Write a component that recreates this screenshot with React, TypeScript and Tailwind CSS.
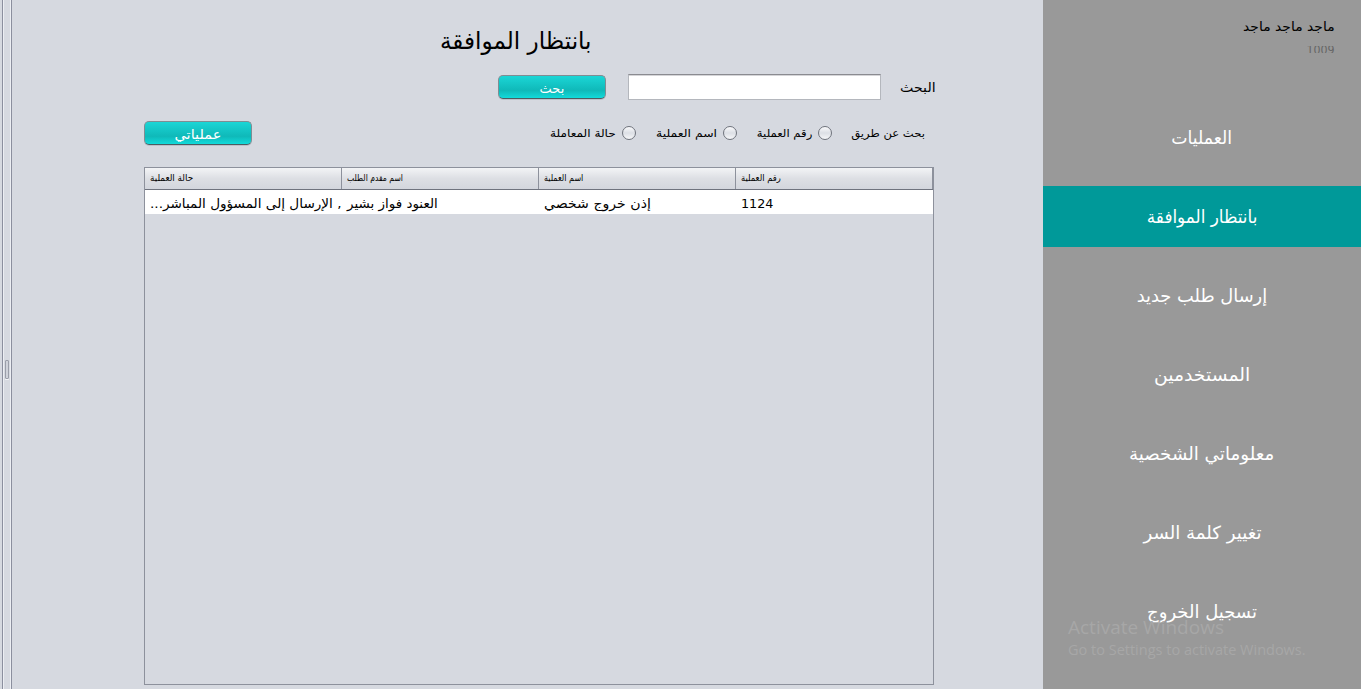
import type { ReactNode } from "react";

const navItems = [
  { label: "العمليات", fit: "scale-x-[0.96]" },
  { label: "بانتظار الموافقة", fit: "scale-x-[0.935]", active: true },
  { label: "إرسال طلب جديد", fit: "scale-x-[0.99]" },
  { label: "المستخدمين", fit: "scale-x-[1.045]" },
  { label: "معلوماتي الشخصية", fit: "scale-x-[1.014]" },
  { label: "تغيير كلمة السر", fit: "scale-x-[1.01]" },
  { label: "تسجيل الخروج", fit: "" },
];

const columns = [
  { label: "حالة العملية", fit: "scale-x-[0.98]" },
  { label: "اسم مقدم الطلب", fit: "scale-x-[0.85]" },
  { label: "اسم العملية", fit: "scale-x-[0.89]" },
  { label: "رقم العملية", fit: "scale-x-[0.93]" },
];

const row = [
  { text: ", الإرسال إلى المسؤول المباشر...", fit: "scale-x-[1.045]" },
  { text: "العنود فواز بشير", fit: "scale-x-[1.035]" },
  { text: "إذن خروج شخصي", fit: "scale-x-[1.085]" },
  { text: "1124", fit: "scale-x-[0.98]" },
];

function Splitter() {
  return (
    <div className="flex h-full w-3 shrink-0 pl-[2px]">
      <div className="w-px bg-[#8b8f9e]" />
      <div className="w-px bg-[#eceef3]" />
      <div className="flex flex-1 items-start justify-center pt-[360px]">
        <div className="h-[19px] w-1 rounded-[1px] border border-[#9a9ea9] bg-[#cfd2da] shadow-[0_1px_0_#f3f4f7]" />
      </div>
      <div className="w-px bg-[#eceef3]" />
      <div className="w-px bg-[#8b8f9e]" />
    </div>
  );
}

function TealButton({ children }: { children: ReactNode }) {
  return (
    <button className="flex h-6 w-[108px] items-center justify-center rounded-[5px] border border-[#7f8d93] border-b-[#4c5c61] bg-linear-to-b from-[#1bd6d6] via-[#0fb9b9] via-65% to-[#12dada] pt-[2px] text-[13px] leading-none text-white shadow-[0_1px_0_#bcc0c9]">
      {children}
    </button>
  );
}

function Radio({ label, width, fit }: { label: string; width: string; fit: string }) {
  return (
    <label className="flex items-center gap-[6px]">
      <span className="h-[14px] w-[14px] shrink-0 rounded-full border border-[#6f737c] bg-linear-to-b from-[#fafafc] via-[#dcdfe5] to-[#f6f7f9]" />
      <span className={`${width} whitespace-nowrap`}>
        <span className={`inline-block origin-right ${fit}`}>{label}</span>
      </span>
    </label>
  );
}

export default function App() {
  return (
    <div className="flex h-[689px] w-[1361px] overflow-hidden bg-[#d6d9e0] font-['DejaVu_Sans',sans-serif] text-black">
      <Splitter />
      <main className="flex h-full flex-1 flex-col pl-[132px]">
        <h1 className="mt-[23px] ml-[296px] flex h-9 w-[151px] items-center justify-center text-[24px] leading-none whitespace-nowrap">
          <span className="scale-x-[0.962]">بانتظار الموافقة</span>
        </h1>
        <div className="mt-[15px] flex h-[26px] items-center pl-[354px]">
          <TealButton>بحث</TealButton>
          <input className="ml-[22px] h-[26px] w-[253px] border border-[#b4b7bd] border-t-[#8a8b90] bg-white shadow-[inset_0_1px_0_#d5d5d8] outline-none" />
          <span dir="rtl" className="ml-[19px] flex w-9 items-center text-[13px] leading-none whitespace-nowrap">
            <span className="origin-right scale-x-[1.09]">البحث</span>
          </span>
        </div>
        <div className="mt-[21px] flex h-6 w-[781px] items-center justify-between">
          <TealButton>
            <span className="scale-x-[1.12]">عملياتي</span>
          </TealButton>
          <div dir="rtl" className="flex items-center text-[11px] leading-none">
            <span className="ml-5 w-[73px] whitespace-nowrap">
              <span className="inline-block origin-right scale-x-[1.055]">بحث عن طريق</span>
            </span>
            <div className="flex gap-5">
              <Radio label="رقم العملية" width="w-[55px]" fit="scale-x-[1.06]" />
              <Radio label="اسم العملية" width="w-[61px]" fit="scale-x-[1.13]" />
              <Radio label="حالة المعاملة" width="w-[66px]" fit="scale-x-[1.1]" />
            </div>
          </div>
        </div>
        <section className="mt-[22px] h-[518px] w-[790px] border border-[#8d919c]">
          <div className="flex h-[22px] border-b border-[#6f737e] bg-linear-to-b from-[#f3f4f6] via-[#dddfe4] to-[#d3d6dd]">
            {columns.map((c) => (
              <div key={c.label} className="flex w-[197px] items-center border-r border-[#8d919c] pl-[5px] text-[9px] leading-none whitespace-nowrap">
                <span className={`origin-left ${c.fit}`}>{c.label}</span>
              </div>
            ))}
          </div>
          <div className="flex h-[24px] bg-white text-[13px] leading-none">
            {row.map((c) => (
              <div key={c.text} dir="rtl" className="flex w-[197px] items-center justify-end pt-[2px] pl-[5px] whitespace-nowrap">
                <span className={`origin-left ${c.fit}`}>{c.text}</span>
              </div>
            ))}
          </div>
        </section>
      </main>
      <aside className="relative flex h-full w-[318px] shrink-0 flex-col bg-[#999999]">
        <div dir="rtl" className="flex h-[107px] flex-col items-start pt-[17px] pr-[26px]">
          <span className="flex h-[18px] origin-right scale-x-[1.07] items-center text-[13px] leading-none">ماجد ماجد ماجد</span>
          <span className="mt-[11px] flex h-[7px] origin-right scale-x-[0.92] items-center overflow-hidden text-[12px] leading-none text-[#666]">1009</span>
        </div>
        <nav className="flex flex-col gap-[18px] text-[18px] leading-none text-white">
          {navItems.map((n) => (
            <a key={n.label} className={`flex h-[61px] items-center justify-center whitespace-nowrap ${n.active ? "bg-[#009999]" : ""}`}>
              <span className={n.fit}>{n.label}</span>
            </a>
          ))}
        </nav>
        <div className="absolute top-[615px] left-[25px] font-['Open_Sans',sans-serif] text-[#a7a7a7]">
          <p className="text-[19px] leading-[25px]">Activate Windows</p>
          <p className="text-[14.5px] leading-[20px]">Go to Settings to activate Windows.</p>
        </div>
      </aside>
    </div>
  );
}
